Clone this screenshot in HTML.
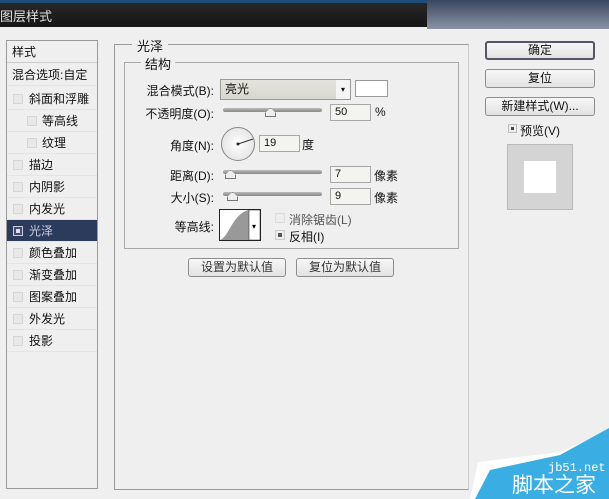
<!DOCTYPE html>
<html><head><meta charset="utf-8"><style>
*{margin:0;padding:0;box-sizing:border-box}
body{width:609px;height:499px;overflow:hidden;background:#efefef;font-family:"Liberation Sans","Noto Sans CJK SC",sans-serif;font-size:12px;color:#111;position:relative}
.a{position:absolute;white-space:nowrap}
.tb{left:0;top:0;width:609px;height:27px;background:linear-gradient(#2a2a2a,#151515);}
.lp{left:6px;top:40px;width:92px;height:449px;border:1px solid #9a9a9a;background:#efefef}
.it{position:absolute;left:0;width:90px;height:22px;line-height:22px;padding-left:22px;border-bottom:1px solid #e4e4e4}
.cb{position:absolute;left:6px;top:6px;width:10px;height:10px;border:1px solid #d6d6d6;background:#e8e8e8}
.inp{border:1px solid #a8a8a8;background:#f3f3ef;height:17px;line-height:15px;padding-left:4px;font-size:11px}
.sl{height:4px;border-radius:2px;background:linear-gradient(#bbb,#888);}
.btn{border:1px solid #8d8d8d;border-radius:3px;background:linear-gradient(#f7f7f7,#e2e2e2);text-align:center;height:19px;line-height:17px}
.lb{text-align:right}
.th{width:11px;height:9px;border:1px solid #777;background:#eee;clip-path:polygon(50% 0,100% 55%,100% 100%,0 100%,0 55%)}
</style></head><body>
<div class="a tb"></div>
<div class="a" style="left:0;top:0;width:609px;height:3px;background:#1f4d7a"></div>
<div class="a" style="left:427px;top:0;width:182px;height:29px;background:linear-gradient(#3a4660,#8a93a6)"></div>
<div class="a" style="left:0;top:6px;color:#e0e0e0;font-size:13px">图层样式</div>

<div class="a lp">
<div class="it" style="top:0;padding-left:5px;height:22px;border-bottom:1px solid #ccc">样式</div>
<div class="it" style="top:23px;padding-left:5px">混合选项:自定</div>
<div class="it" style="top:47px"><span class="cb"></span>斜面和浮雕</div>
<div class="it" style="top:69px;padding-left:35px"><span class="cb" style="left:20px"></span>等高线</div>
<div class="it" style="top:91px;padding-left:35px"><span class="cb" style="left:20px"></span>纹理</div>
<div class="it" style="top:113px"><span class="cb"></span>描边</div>
<div class="it" style="top:135px"><span class="cb"></span>内阴影</div>
<div class="it" style="top:157px"><span class="cb"></span>内发光</div>
<div class="it" style="top:179px;background:#2c3a5c;color:#c8cce0"><span class="cb" style="background:#444e6a;border-color:#c8cce0"><span style="position:absolute;left:2px;top:2px;width:4px;height:4px;background:#dde"></span></span>光泽</div>
<div class="it" style="top:201px"><span class="cb"></span>颜色叠加</div>
<div class="it" style="top:223px"><span class="cb"></span>渐变叠加</div>
<div class="it" style="top:245px"><span class="cb"></span>图案叠加</div>
<div class="it" style="top:267px"><span class="cb"></span>外发光</div>
<div class="it" style="top:289px"><span class="cb"></span>投影</div>
</div>

<div class="a" style="left:114px;top:44px;width:355px;height:446px;border:1px solid #9a9a9a;border-right-color:#ccc"></div>
<div class="a" style="left:132px;top:36px;background:#efefef;padding:0 5px;font-size:13px">光泽</div>
<div class="a" style="left:124px;top:62px;width:335px;height:187px;border:1px solid #a8a8a8"></div>
<div class="a" style="left:141px;top:54px;background:#efefef;padding:0 4px;font-size:13px">结构</div>

<div class="a lb" style="left:130px;width:84px;top:82px">混合模式(B):</div>
<div class="a" style="left:220px;top:79px;width:131px;height:21px;border:1px solid #999;background:linear-gradient(#e4e3dc,#d9d8d0);padding-left:4px;line-height:19px">亮光<span style="position:absolute;right:0;top:0;width:14px;height:19px;background:#f4f4f4;font-size:8px;text-align:center">▾</span></div>
<div class="a" style="left:355px;top:80px;width:33px;height:17px;border:1px solid #999;background:#fff"></div>

<div class="a lb" style="left:130px;width:84px;top:105px">不透明度(O):</div>
<div class="a sl" style="left:223px;top:108px;width:99px"></div>
<div class="a th" style="left:265px;top:108px"></div>
<div class="a inp" style="left:330px;top:104px;width:41px">50</div>
<div class="a" style="left:375px;top:105px">%</div>

<div class="a lb" style="left:130px;width:84px;top:137px">角度(N):</div>
<div class="a" style="left:221px;top:127px;width:34px;height:34px;border-radius:50%;border:1px solid #888;background:radial-gradient(#fff,#ddd)"></div>
<svg class="a" style="left:221px;top:127px" width="34" height="34"><line x1="17" y1="17" x2="32" y2="12" stroke="#333" stroke-width="1"/><circle cx="17" cy="17" r="1.5" fill="#222"/></svg>
<div class="a inp" style="left:259px;top:135px;width:41px">19</div>
<div class="a" style="left:302px;top:136px">度</div>

<div class="a lb" style="left:130px;width:84px;top:167px">距离(D):</div>
<div class="a sl" style="left:223px;top:170px;width:99px"></div>
<div class="a th" style="left:225px;top:170px"></div>
<div class="a inp" style="left:330px;top:166px;width:41px">7</div>
<div class="a" style="left:374px;top:167px">像素</div>

<div class="a lb" style="left:130px;width:84px;top:189px">大小(S):</div>
<div class="a sl" style="left:223px;top:192px;width:99px"></div>
<div class="a th" style="left:227px;top:192px"></div>
<div class="a inp" style="left:330px;top:188px;width:41px">9</div>
<div class="a" style="left:374px;top:189px">像素</div>

<div class="a lb" style="left:130px;width:84px;top:218px">等高线:</div>
<svg class="a" style="left:219px;top:209px" width="42" height="32"><rect x="0.5" y="0.5" width="41" height="31" fill="#fff" stroke="#222"/><path d="M1 31 C10 28 14 4 30 1 L30 31 Z" fill="#999"/><rect x="30" y="1" width="11" height="30" fill="#fff" stroke="#222" stroke-width="0.5"/><text x="33" y="20" font-size="8">▾</text></svg>
<div class="a" style="left:275px;top:213px;width:10px;height:10px;border:1px solid #ddd;background:#eee"></div>
<div class="a" style="left:289px;top:211px;color:#555">消除锯齿(L)</div>
<div class="a" style="left:275px;top:230px;width:10px;height:10px;border:1px solid #ccc;background:#eee"><span style="position:absolute;left:2px;top:2px;width:4px;height:4px;background:#555"></span></div>
<div class="a" style="left:289px;top:228px">反相(I)</div>

<div class="a btn" style="left:188px;top:258px;width:98px;color:#333">设置为默认值</div>
<div class="a btn" style="left:296px;top:258px;width:98px;color:#333">复位为默认值</div>

<div class="a btn" style="left:485px;top:41px;width:110px;border-color:#556;border-width:2px;line-height:15px">确定</div>
<div class="a btn" style="left:485px;top:69px;width:110px">复位</div>
<div class="a btn" style="left:485px;top:97px;width:110px">新建样式(W)...</div>
<div class="a" style="left:508px;top:124px;width:9px;height:9px;border:1px solid #bbb;background:#eee"><span style="position:absolute;left:2px;top:2px;width:3px;height:3px;background:#444"></span></div>
<div class="a" style="left:520px;top:122px">预览(V)</div>
<div class="a" style="left:507px;top:144px;width:66px;height:66px;background:#d4d4d4;border:1px solid #bbb"></div>
<div class="a" style="left:524px;top:161px;width:32px;height:32px;background:#fff"></div>

<svg class="a" style="left:0;top:0" width="609" height="499"><polygon points="609,430 609,499 470,499 478,462 560,452" fill="#fff" opacity="0.9"/><polygon points="609,428 609,499 475,499 490,470 560,455" fill="#3aaee2"/></svg>
<div class="a" style="left:548px;top:461px;color:#fff;font-family:'Liberation Mono',monospace;font-size:12px">jb51.net</div>
<div class="a" style="left:512px;top:474px;color:#fff;font-size:21px;line-height:24px">脚本之家</div>
</body></html>
